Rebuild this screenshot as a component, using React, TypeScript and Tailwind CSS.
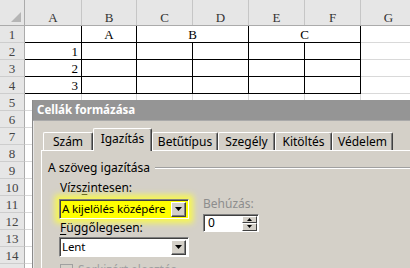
import React from "react";

// Column header strip of the sheet
const columns = [
  { name: "A", w: "w-[57px]" },
  { name: "B", w: "w-[55px]" },
  { name: "C", w: "w-[56px]" },
  { name: "D", w: "w-[56px]" },
  { name: "E", w: "w-[56px]" },
  { name: "F", w: "w-[56px]" },
  { name: "G", w: "w-[56px]" },
];

const rowNumbers = [5, 6, 7, 8, 9, 10, 11, 12, 13, 14, 15];

function RowHeader({ n }: { n: number }) {
  return (
    <div className="w-[25px] shrink-0 flex items-center justify-center bg-[#e6e6e6] border-r border-r-[#ababab] border-b border-b-[#cdcdcd] text-[#444]">
      {n}
    </div>
  );
}

function Sheet() {
  return (
    <div className="flex flex-col font-['Liberation_Serif',serif] text-[13px] leading-none text-black">
      <div className="flex h-[26px] bg-[#e6e6e6] border-b border-[#ababab]">
        <div className="relative w-[25px] shrink-0 border-r border-[#ababab]">
          <svg className="absolute right-[3px] bottom-[3px]" width="10" height="10" viewBox="0 0 10 10">
            <polygon points="10,0 10,10 0,10" fill="#b5b5b5" />
          </svg>
        </div>
        {columns.map((c) => (
          <div
            key={c.name}
            className={`${c.w} shrink-0 flex items-end justify-center pb-[1px] border-r border-[#c6c6c6] text-[#333]`}
          >
            {c.name}
          </div>
        ))}
      </div>

      {/* Row 1: centred across selection */}
      <div className="flex h-[17px]">
        <RowHeader n={1} />
        <div className="w-[57px] shrink-0 border-r border-b border-black" />
        <div className="w-[55px] shrink-0 flex items-center justify-center border-r border-b border-black">A</div>
        <div className="w-[112px] shrink-0 flex items-center justify-center border-r border-b border-black">B</div>
        <div className="w-[112px] shrink-0 flex items-center justify-center border-r border-b border-black">C</div>
        <div className="w-[56px] shrink-0 border-r border-b border-[#d9d9d9]" />
      </div>

      {[1, 2, 3].map((v) => (
        <div key={v} className="flex h-[17px]">
          <RowHeader n={v + 1} />
          <div className="w-[57px] shrink-0 flex items-center justify-end pr-[3px] border-r border-b border-black">{v}</div>
          <div className="w-[55px] shrink-0 border-r border-b border-black" />
          <div className="w-[56px] shrink-0 border-r border-b border-black" />
          <div className="w-[56px] shrink-0 border-r border-b border-black" />
          <div className="w-[56px] shrink-0 border-r border-b border-black" />
          <div className="w-[56px] shrink-0 border-r border-b border-black" />
          <div className="w-[56px] shrink-0 border-r border-b border-[#d9d9d9]" />
        </div>
      ))}

      {rowNumbers.map((n) => (
        <div key={n} className="flex h-[17px]">
          <RowHeader n={n} />
          {columns.map((c) => (
            <div key={c.name} className={`${c.w} shrink-0 border-r border-b border-[#d9d9d9]`} />
          ))}
        </div>
      ))}
    </div>
  );
}

const tabs = [
  { label: "Szám", w: "w-[50px]" },
  { label: "Igazítás", w: "w-[59px]", active: true },
  { label: "Betűtípus", w: "w-[66px]" },
  { label: "Szegély", w: "w-[57px]" },
  { label: "Kitöltés", w: "w-[57px]" },
  { label: "Védelem", w: "w-[61px]" },
];

function DropArrow() {
  return (
    <div className="w-[15px] h-[15px] shrink-0 flex items-center justify-center bg-[#d4d0c8] border-t border-l border-t-white border-l-white border-r border-b border-r-[#404040] border-b-[#404040] shadow-[inset_-1px_-1px_0_#808080]">
      <svg width="7" height="4" viewBox="0 0 7 4">
        <polygon points="0,0 7,0 3.5,4" fill="#000" />
      </svg>
    </div>
  );
}

function Select({ value, highlight }: { value: string; highlight?: boolean }) {
  return (
    <div
      className={`flex items-center h-[20px] w-[130px] border border-t-[#808080] border-l-[#808080] border-r-white border-b-white pr-[2px] ${
        highlight
          ? "bg-[#ffff00] shadow-[0_0_6px_4px_#f8f850,inset_1px_1px_0_#404040]"
          : "bg-white shadow-[inset_1px_1px_0_#404040]"
      }`}
    >
      <span className="flex-1 min-w-0 pl-[2px] whitespace-nowrap overflow-hidden text-black text-[11.5px] tracking-[-0.15px]">
        {value}
      </span>
      <DropArrow />
    </div>
  );
}

function SpinBox() {
  return (
    <div className="flex items-center h-[18px] w-[56px] bg-white border border-t-[#808080] border-l-[#808080] border-r-white border-b-white shadow-[inset_1px_1px_0_#404040] pr-[1px]">
      <span className="flex-1 pl-[4px] text-black">0</span>
      <div className="flex flex-col w-[15px] h-[15px]">
        {["up", "down"].map((d) => (
          <div
            key={d}
            className="flex-1 flex items-center justify-center bg-[#d4d0c8] border-t border-l border-t-white border-l-white border-r border-b border-r-[#404040] border-b-[#404040]"
          >
            <svg width="5" height="3" viewBox="0 0 5 3">
              {d === "up" ? (
                <polygon points="0,3 5,3 2.5,0" fill="#000" />
              ) : (
                <polygon points="0,0 5,0 2.5,3" fill="#000" />
              )}
            </svg>
          </div>
        ))}
      </div>
    </div>
  );
}

function FormatDialog() {
  return (
    <div className="absolute left-[32px] top-[100px] w-[400px] h-[180px] flex flex-col bg-[#d4d0c8] border-l border-[#8a8a8a] shadow-[inset_1px_0_0_#e8e8e8] font-['Noto_Sans',sans-serif] text-[12px] leading-[16px]">
      <div className="h-[21px] shrink-0 flex items-center pl-[4px] bg-[#959595] border-b border-[#aaaaaa] text-white font-bold text-[11.5px]">
        Cellák formázása
      </div>

      <div className="flex items-end h-[22px] mt-[7px] pl-[10px]">
        {tabs.map((t) =>
          t.active ? (
            <div
              key={t.label}
              className={`${t.w} relative z-10 -mb-px h-[23px] flex items-center justify-center pb-[3px] bg-[#d4d0c8] border-t border-l border-white border-r border-r-[#404040] shadow-[inset_-1px_0_0_#808080] rounded-t-[2px] text-black`}
            >
              {t.label}
            </div>
          ) : (
            <div
              key={t.label}
              className={`${t.w} h-[18px] flex items-center justify-center pt-[1px] border-t border-l border-white border-r border-r-[#404040] shadow-[inset_-1px_0_0_#808080] rounded-t-[2px] text-black`}
            >
              {t.label}
            </div>
          )
        )}
      </div>

      <div className="flex-1 ml-[8px] border-t border-l border-white flex flex-col">
        <div className="flex items-center h-[16px] mt-[9px] pl-[6px]">
          <span className="text-black">A szöveg igazítása</span>
          <div className="flex-1 ml-[5px] border-t border-t-[#a0a0a0] border-b border-b-white" />
        </div>

        <div className="flex pl-[17px]">
          <div className="flex flex-col w-[130px]">
            <div className="mt-[4px] h-[16px] pl-[1px] text-black">
              Vízs<span className="underline underline-offset-2">z</span>intesen:
            </div>
            <div className="mt-[3px]">
              <Select value="A kijelölés középére" highlight />
            </div>
            <div className="mt-[1px] h-[16px] pl-[1px] text-black">
              <span className="underline underline-offset-2">F</span>üggőlegesen:
            </div>
            <div className="mt-[1px]">
              <Select value="Lent" />
            </div>
            <div className="mt-[5px] flex items-center gap-[5px] pl-[1px] text-[#a0a0a0] whitespace-nowrap">
              <div className="w-[13px] h-[13px] shrink-0 border border-[#a0a0a0] bg-[#d4d0c8]" />
              <span>Sorkizárt elosztás</span>
            </div>
          </div>

          <div className="flex flex-col ml-[14px] mt-[20px]">
            <div className="h-[16px] text-[#8d8d8d]">Behúzás:</div>
            <div className="mt-[2px]">
              <SpinBox />
            </div>
          </div>
        </div>
      </div>
    </div>
  );
}

export default function App() {
  return (
    <div className="relative w-[410px] h-[268px] overflow-hidden bg-white">
      <Sheet />
      <FormatDialog />
    </div>
  );
}
